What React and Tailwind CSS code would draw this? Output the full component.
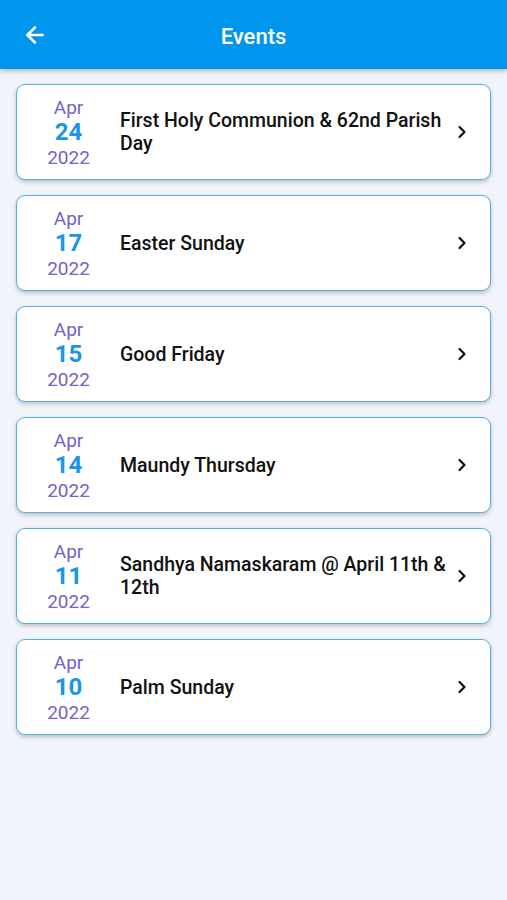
import React from "react";
import { ArrowLeft, ChevronRight } from "lucide-react";

const events = [
    { month: "Apr", day: "24", year: "2022", title: "First Holy Communion & 62nd Parish Day" },
    { month: "Apr", day: "17", year: "2022", title: "Easter Sunday" },
    { month: "Apr", day: "15", year: "2022", title: "Good Friday" },
    { month: "Apr", day: "14", year: "2022", title: "Maundy Thursday" },
    { month: "Apr", day: "11", year: "2022", title: "Sandhya Namaskaram @ April 11th & 12th" },
    { month: "Apr", day: "10", year: "2022", title: "Palm Sunday" },
];

const App = () => {
    return (
        <div className="min-h-[900px] bg-[#f2f4fb] font-['Roboto',sans-serif]">
            {/* Header */}
            <header className="relative h-[69px] bg-[#0096ee] flex items-center justify-center shadow-[0_2px_5px_rgba(0,0,0,0.25)]">
                <button className="absolute left-[22px] top-[22px] text-white">
                    <ArrowLeft size={26} strokeWidth={2.4} />
                </button>
                <h1 className="text-white text-[22px] font-medium pt-[3px]">Events</h1>
            </header>

            {/* Event list */}
            <div className="flex flex-col gap-[15px] px-[16px] pt-[15px]">
                {events.map((ev) => (
                    <div
                        key={ev.day}
                        className="h-[96px] bg-white rounded-[9px] border-[1.5px] border-[#5aaee6] shadow-[0_2px_4px_rgba(0,0,0,0.22)] flex items-center"
                    >
                        <div className="w-[103px] shrink-0 flex flex-col items-center leading-[25px]">
                            <span className="text-[19px] text-[#7462c6]">{ev.month}</span>
                            <span className="text-[24px] font-bold text-[#1b95e8]">{ev.day}</span>
                            <span className="text-[19px] text-[#7462c6]">{ev.year}</span>
                        </div>
                        <div className="flex-1 text-[19.5px] font-medium text-[#111] leading-[23px]">
                            {ev.title}
                        </div>
                        <div className="w-[42px] shrink-0 flex justify-end pr-[18px] text-[#111]">
                            <ChevronRight size={20} strokeWidth={2.6} />
                        </div>
                    </div>
                ))}
            </div>
        </div>
    );
};

export default App;
